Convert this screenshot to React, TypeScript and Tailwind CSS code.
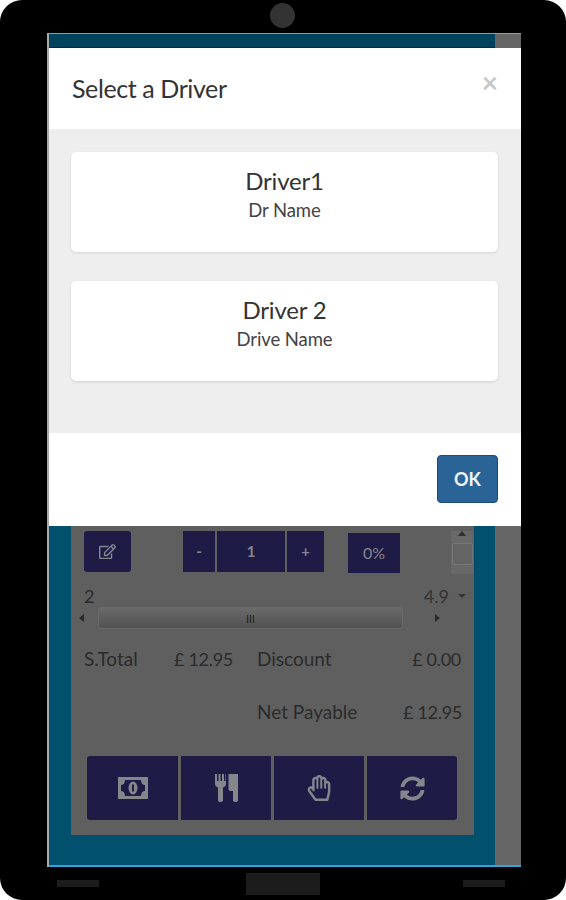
import React from "react";
import { FaRegEdit, FaRegHandPaper, FaSyncAlt } from "react-icons/fa";

function Driver({ title, sub }: { title: string; sub: string }) {
  return (
    <div className="h-[100px] rounded-[5px] bg-white shadow-[0_1px_3px_rgba(0,0,0,0.12)] pt-[14px] text-center text-[#333]">
      <div className="text-[24px] leading-[30px] tracking-[-0.2px]">{title}</div>
      <div className="mt-[1px] text-[18.5px] leading-[27px] tracking-[-0.1px] text-[#444]">{sub}</div>
    </div>
  );
}

function Tile({ children, cls }: { children: React.ReactNode; cls: string }) {
  return <div className={`flex items-center justify-center bg-[#1e1b47] text-[#85858c] ${cls}`}>{children}</div>;
}

function MoneyIcon() {
  return (
    <svg width="30" height="22" viewBox="0 0 30 22">
      <path
        fillRule="evenodd"
        fill="currentColor"
        d="M0 0h30v22H0z M7 3 C7 6 5.500 8 3 8 V14 C5.500 14 7 16 7 19 H23 C23 16 24.500 14 27 14 V8 C24.500 8 23 6 23 3 Z"
      />
      <ellipse cx="15" cy="11" rx="4.500" ry="6.500" fill="currentColor" />
      <rect x="14" y="7.500" width="2" height="7" fill="#1e1b47" />
    </svg>
  );
}

function CutleryIcon() {
  return (
    <svg width="23" height="28" viewBox="0 0 23 28">
      <path
        fill="currentColor"
        d="M0 0h2v7h1.500V0h2v7H7V0h2v7h1.500V0H11v10c0 2-1.500 3-3 3.500V26c0 1.500-1 2-2.500 2S3 27.500 3 26V13.500C1.500 13 0 12 0 10z"
      />
      <path
        fill="currentColor"
        d="M13.500 0H23v26c0 1.500-1 2-2.500 2S18 27.500 18 26v-9h-2.500c-1.200 0-2-.8-2-2z"
      />
    </svg>
  );
}

export default function App() {
  return (
    <div className="h-[900px] w-[566px] bg-white font-['Lato','Noto_Sans',sans-serif]">
      <div className="relative flex h-[900px] w-[566px] flex-col rounded-[22px] bg-black pl-[47px] pr-[45px] pt-[33px]">
        <div className="absolute left-[270px] top-[3px] h-[25px] w-[25px] rounded-full bg-[#333]" />
        <div className="flex h-[834px] flex-col border-l-[2px] border-[#aaa] bg-[#5f5f5f]">
          <div className="flex h-[15px] shrink-0 border-t border-[#999]">
            <div className="w-[446px] border-b border-[#1a1a4a] bg-[#00435c]" />
            <div className="flex-1 bg-[#666]" />
          </div>
          <div className="flex h-[478px] shrink-0 flex-col bg-white">
            <div className="flex h-[81px] shrink-0 items-start justify-between pl-[23px] pr-[23px] pt-[24px]">
              <span className="text-[25px] leading-[32px] tracking-[-0.4px] text-[#333]">Select a Driver</span>
              <span className="mt-[-6px] text-[28px] font-bold leading-[32px] text-[#c8c8c8]">×</span>
            </div>
            <div className="flex h-[304px] shrink-0 flex-col gap-[29px] bg-[#eeeeee] pl-[22px] pr-[23px] pt-[23px]">
              <Driver title="Driver1" sub="Dr Name" />
              <Driver title="Driver 2" sub="Drive Name" />
            </div>
            <div className="flex flex-1 justify-end pr-[23px] pt-[22px]">
              <div className="flex h-[48px] w-[61px] items-center justify-center rounded-[4px] border border-[#1d4c7c] bg-[#2a6496] text-[18px] font-bold text-[#eef3f7]">OK</div>
            </div>
          </div>
          <div className="flex flex-1 flex-col">
            <div className="flex flex-1">
              <div className="w-[22px] shrink-0 bg-[#00506e]" />
              <div className="w-[403px] shrink-0">
                <div className="flex h-[309px] flex-col rounded-b-[4px] bg-[#5f5f5f] text-[#2b2b2b]">
                  <div className="flex h-[48px] shrink-0 pl-[13px] pt-[5px]">
                    <Tile cls="h-[41px] w-[47px] rounded-[3px]"><FaRegEdit size={17} /></Tile>
                    <div className="ml-[52px] flex h-[41px] gap-[2px]">
                      <Tile cls="w-[32px] text-[15px] font-bold">-</Tile>
                      <Tile cls="w-[68px] text-[15px] font-bold">1</Tile>
                      <Tile cls="w-[37px] text-[15px] font-bold">+</Tile>
                    </div>
                    <Tile cls="ml-[24px] mt-[2px] h-[40px] w-[52px] text-[16px]">0%</Tile>
                    <div className="ml-[51px] flex w-[22px] flex-col items-center bg-[#686868]">
                      <div className="h-0 w-0 border-x-[4px] border-b-[5px] border-x-transparent border-b-[#2e2e2e]" />
                      <div className="mt-[7px] h-[22px] w-[21px] rounded-[2px] border border-[#777] bg-[#646464]" />
                    </div>
                  </div>
                  <div className="flex h-[33px] shrink-0 items-center justify-between pl-[13px] pr-[8px] pt-[10px] text-[18px] leading-none">
                    <span>2</span>
                    <span className="flex items-center gap-[9px] text-[#333]">4.9<span className="h-0 w-0 border-x-[4px] border-t-[4px] border-x-transparent border-t-[#333]" /></span>
                  </div>
                  <div className="flex h-[22px] shrink-0 items-center pl-[8px]">
                    <span className="h-0 w-0 border-y-[4px] border-r-[5px] border-y-transparent border-r-[#2a2a2a]" />
                    <div className="ml-[14px] flex h-[22px] w-[305px] items-center justify-center rounded-[3px] border border-[#6a6a6a] bg-gradient-to-b from-[#6a6a6a] to-[#525252] text-[11px] leading-none text-[#222]">III</div>
                    <span className="ml-[32px] h-0 w-0 border-y-[4px] border-l-[5px] border-y-transparent border-l-[#2a2a2a]" />
                  </div>
                  <div className="mt-[19px] flex whitespace-nowrap pl-[13px] text-[19px] leading-[22px]">
                    <span className="w-[90px]">S.Total</span>
                    <span className="w-[83px] text-[18px] tracking-[-0.3px]">£ 12.95</span>
                    <span className="w-[146px]">Discount</span>
                    <span className="w-[60px] pr-[2px] text-right text-[18px] tracking-[-0.3px]">£ 0.00</span>
                  </div>
                  <div className="mt-[31px] flex whitespace-nowrap pl-[186px] text-[19px] leading-[22px]">
                    <span className="w-[146px]">Net Payable</span>
                    <span className="w-[60px] pr-[2px] text-right text-[18px] tracking-[-0.3px]">£ 12.95</span>
                  </div>
                  <div className="ml-[16px] mt-[33px] flex h-[64px] gap-[3px]">
                    <Tile cls="w-[91px] rounded-l-[3px]"><MoneyIcon /></Tile>
                    <Tile cls="w-[90px]"><CutleryIcon /></Tile>
                    <Tile cls="w-[90px]"><FaRegHandPaper size={26} /></Tile>
                    <Tile cls="w-[90px] rounded-r-[3px]"><FaSyncAlt size={25} /></Tile>
                  </div>
                </div>
                <div className="h-[30px] bg-[#00506e]" />
              </div>
              <div className="w-[21px] shrink-0 bg-[#00506e]" />
              <div className="flex-1 bg-[#666]" />
            </div>
            <div className="h-[2px] shrink-0 bg-[#35a3dc]" />
          </div>
        </div>
        <div className="flex h-[33px] items-center pl-[10px]">
          <div className="h-[7px] w-[42px] bg-[#1c1c1c]" />
          <div className="ml-[147px] h-[22px] w-[74px] bg-[#1c1c1c]" />
          <div className="ml-[143px] h-[7px] w-[42px] bg-[#1c1c1c]" />
        </div>
      </div>
    </div>
  );
}
